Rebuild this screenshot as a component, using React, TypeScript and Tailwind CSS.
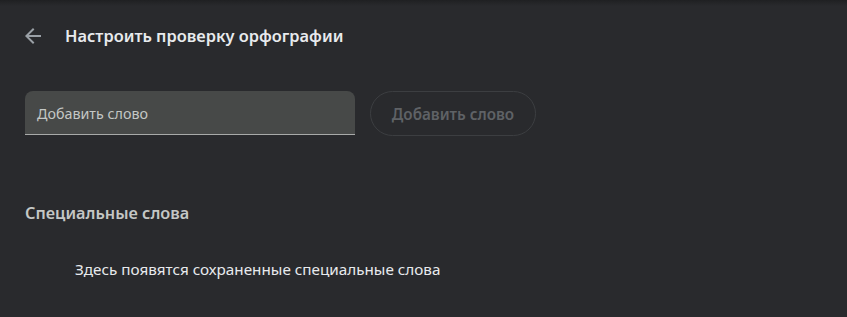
export default function App() {
  return (
    <div className="relative h-[317px] w-[847px] overflow-hidden bg-[#292a2d] font-['Noto_Sans',sans-serif]">
      <div className="absolute inset-x-0 top-0 h-[6px] bg-gradient-to-b from-[#1f2022] to-transparent" />
      <div className="flex h-[72px] items-center pl-[21px]">
        <svg viewBox="0 0 24 24" className="size-[24px] fill-[#9aa0a6]">
          <path d="M20 11H7.83l5.59-5.59L12 4l-8 8 8 8 1.41-1.41L7.83 13H20v-2z" />
        </svg>
        <h1 className="ml-[20px] text-[16.4px] font-semibold text-[#e8eaed]">Настроить проверку орфографии</h1>
      </div>
      <div className="mt-[19px] flex items-start gap-[15px] pl-[25px]">
        <div className="flex h-[44px] w-[330px] items-center rounded-t-[8px] border-b border-[#a8aaa9] bg-[#474948] px-[12px] pt-[3px]">
          <span className="text-[14.3px] text-[#c4c7c5]">Добавить слово</span>
        </div>
        <button className="flex h-[45px] w-[166px] items-center justify-center rounded-full border border-[#3c3e41] pt-[2px] text-[15.2px] font-semibold text-[#5f6266]">
          Добавить слово
        </button>
      </div>
      <h2 className="mt-[65px] pl-[25px] text-[16.3px] font-semibold text-[#c4c7c5]">Специальные слова</h2>
      <p className="mt-[33px] pl-[75px] text-[15.25px] text-[#e8eaed]">Здесь появятся сохраненные специальные слова</p>
    </div>
  );
}
